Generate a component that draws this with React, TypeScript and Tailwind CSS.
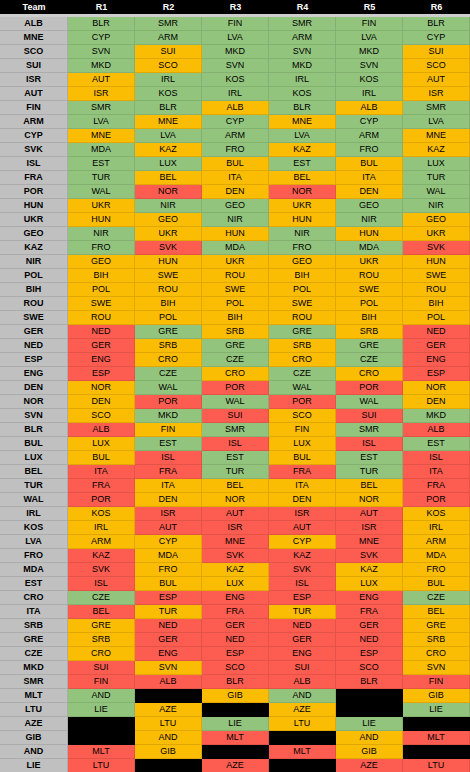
import React from "react";

type C = "G" | "O" | "R" | "K";

const raw = `ALB BLR:G SMR:G FIN:G SMR:G FIN:G BLR:G
MNE CYP:G ARM:G LVA:G ARM:G LVA:G CYP:G
SCO SVN:G SUI:O MKD:G SVN:G MKD:G SUI:O
SUI MKD:G SCO:O SVN:G MKD:G SVN:G SCO:O
ISR AUT:O IRL:G KOS:G IRL:G KOS:G AUT:O
AUT ISR:O KOS:G IRL:G KOS:G IRL:G ISR:O
FIN SMR:G BLR:G ALB:O BLR:G ALB:O SMR:G
ARM LVA:G MNE:O CYP:G MNE:O CYP:G LVA:G
CYP MNE:O LVA:G ARM:G LVA:G ARM:G MNE:O
SVK MDA:G KAZ:O FRO:G KAZ:O FRO:G KAZ:O
ISL EST:G LUX:G BUL:O EST:G BUL:O LUX:G
FRA TUR:G BEL:O ITA:O BEL:O ITA:O TUR:G
POR WAL:G NOR:R DEN:O NOR:R DEN:O WAL:G
HUN UKR:O NIR:G GEO:G UKR:O GEO:G NIR:G
UKR HUN:O GEO:O NIR:G HUN:O NIR:G GEO:O
GEO NIR:G UKR:O HUN:O NIR:G HUN:O UKR:O
KAZ FRO:G SVK:R MDA:G FRO:G MDA:G SVK:R
NIR GEO:O HUN:O UKR:O GEO:O UKR:O HUN:O
POL BIH:O SWE:O ROU:O BIH:O ROU:O SWE:O
BIH POL:O ROU:O SWE:O POL:O SWE:O ROU:O
ROU SWE:O BIH:O POL:O SWE:O POL:O BIH:O
SWE ROU:O POL:O BIH:O ROU:O BIH:O POL:O
GER NED:R GRE:G SRB:O GRE:G SRB:O NED:R
NED GER:R SRB:O GRE:G SRB:O GRE:G GER:R
ESP ENG:R CRO:O CZE:G CRO:O CZE:G ENG:R
ENG ESP:R CZE:G CRO:O CZE:G CRO:O ESP:R
DEN NOR:O WAL:G POR:R WAL:G POR:R NOR:O
NOR DEN:O POR:R WAL:G POR:R WAL:G DEN:O
SVN SCO:O MKD:G SUI:R SCO:O SUI:R MKD:G
BLR ALB:R FIN:O SMR:G FIN:O SMR:G ALB:R
BUL LUX:O EST:G ISL:R LUX:O ISL:R EST:G
LUX BUL:O ISL:R EST:G BUL:O EST:G ISL:R
BEL ITA:R FRA:R TUR:G FRA:R TUR:G ITA:R
TUR FRA:R ITA:O BEL:O ITA:O BEL:O FRA:R
WAL POR:R DEN:O NOR:O DEN:O NOR:O POR:R
IRL KOS:O ISR:R AUT:R ISR:R AUT:R KOS:O
KOS IRL:O AUT:R ISR:R AUT:R ISR:R IRL:O
LVA ARM:O CYP:O MNE:R CYP:O MNE:R ARM:O
FRO KAZ:R MDA:O SVK:R KAZ:R SVK:R MDA:O
MDA SVK:R FRO:O KAZ:O SVK:R KAZ:O FRO:O
EST ISL:R BUL:O LUX:O ISL:R LUX:O BUL:O
CRO CZE:G ESP:R ENG:R ESP:R ENG:R CZE:G
ITA BEL:R TUR:O FRA:R TUR:O FRA:R BEL:O
SRB GRE:O NED:R GER:R NED:R GER:R GRE:O
GRE SRB:O GER:R NED:R GER:R NED:R SRB:O
CZE CRO:O ENG:R ESP:R ENG:R ESP:R CRO:O
MKD SUI:R SVN:O SCO:R SUI:R SCO:R SVN:O
SMR FIN:R ALB:R BLR:R ALB:R BLR:R FIN:R
MLT AND:G -:K GIB:O AND:G -:K GIB:O
LTU LIE:G AZE:O -:K AZE:O -:K LIE:G
AZE -:K LTU:O LIE:G LTU:O LIE:G -:K
GIB -:K AND:O MLT:R -:K AND:O MLT:R
AND MLT:R GIB:O -:K MLT:R GIB:O -:K
LIE LTU:R -:K AZE:R -:K AZE:R LTU:R`;

const rows = raw.split("\n").map((line) => {
  const parts = line.trim().split(" ");
  return {
    team: parts[0],
    cells: parts.slice(1).map((p) => {
      const [t, c] = p.split(":");
      return { t: t === "-" ? "" : t, c: c as C };
    }),
  };
});

const bg: Record<C, string> = {
  G: "bg-[#93c47d]",
  O: "bg-[#fbbc04]",
  R: "bg-[#fd5d51]",
  K: "bg-black",
};

export default function App() {
  return (
    <div
      className="w-[470px] h-[772px] overflow-hidden bg-white text-black"
      style={{ fontFamily: '"Liberation Sans", Arial, sans-serif' }}
    >
      <div className="grid grid-cols-[68px_repeat(6,67px)] h-[14px] bg-black text-white font-bold text-[9px] leading-none">
        {["Team", "R1", "R2", "R3", "R4", "R5", "R6"].map((h) => (
          <div key={h} className="flex items-center justify-center">
            {h}
          </div>
        ))}
      </div>
      <div className="h-[3px] bg-[#cdcdcd]" />
      <div className="grid grid-cols-[68px_repeat(6,67px)] auto-rows-[14px] text-[9px] leading-none">
        {rows.map((r) => (
          <React.Fragment key={r.team}>
            <div className="flex items-center justify-center bg-[#c0c0c0] font-bold border-b border-r border-black/10">
              {r.team}
            </div>
            {r.cells.map((c, i) => (
              <div
                key={i}
                className={`flex items-center justify-center border-b border-r border-black/10 ${bg[c.c]}`}
              >
                {c.t}
              </div>
            ))}
          </React.Fragment>
        ))}
      </div>
    </div>
  );
}
